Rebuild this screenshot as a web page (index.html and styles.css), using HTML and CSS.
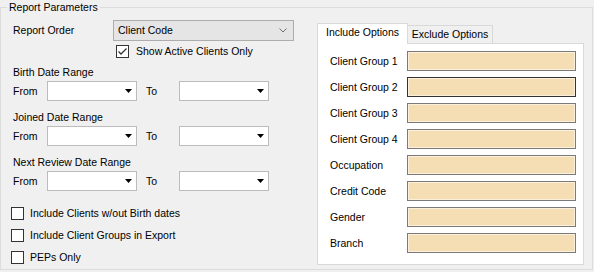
FILE: index.html
```html
<!DOCTYPE html>
<html lang="en">
<head>
  <meta charset="UTF-8">
  <title>Report Parameters</title>
  <link rel="stylesheet" href="styles.css">
</head>
<body>
  <fieldset class="params">
    <legend>Report Parameters</legend>
    <div class="params-body">

      <div class="left-col">
        <div class="order-row">
          <span class="order-label">Report Order</span>
          <div class="combo combo-order">
            <span>Client Code</span>
            <svg width="8" height="5" viewBox="0 0 8 5"><polyline points="0.5,0.5 4,4 7.5,0.5" fill="none" stroke="#707070" stroke-width="1"/></svg>
          </div>
        </div>

        <label class="check check-active">
          <span class="box"><svg width="11" height="11" viewBox="0 0 11 11"><polyline points="1.5,5.5 4,8 9.5,2.5" fill="none" stroke="#333" stroke-width="1.3"/></svg></span>
          Show Active Clients Only
        </label>

        <div class="range">
          <div class="range-title">Birth Date Range</div>
          <div class="range-row">
            <span>From</span>
            <div class="combo date"><svg width="7" height="4" viewBox="0 0 7 4"><polygon points="0,0 7,0 3.5,4" fill="#000"/></svg></div>
            <span class="to">To</span>
            <div class="combo date"><svg width="7" height="4" viewBox="0 0 7 4"><polygon points="0,0 7,0 3.5,4" fill="#000"/></svg></div>
          </div>
        </div>

        <div class="range">
          <div class="range-title">Joined Date Range</div>
          <div class="range-row">
            <span>From</span>
            <div class="combo date"><svg width="7" height="4" viewBox="0 0 7 4"><polygon points="0,0 7,0 3.5,4" fill="#000"/></svg></div>
            <span class="to">To</span>
            <div class="combo date"><svg width="7" height="4" viewBox="0 0 7 4"><polygon points="0,0 7,0 3.5,4" fill="#000"/></svg></div>
          </div>
        </div>

        <div class="range">
          <div class="range-title">Next Review Date Range</div>
          <div class="range-row">
            <span>From</span>
            <div class="combo date"><svg width="7" height="4" viewBox="0 0 7 4"><polygon points="0,0 7,0 3.5,4" fill="#000"/></svg></div>
            <span class="to">To</span>
            <div class="combo date"><svg width="7" height="4" viewBox="0 0 7 4"><polygon points="0,0 7,0 3.5,4" fill="#000"/></svg></div>
          </div>
        </div>

        <div class="extra-checks">
          <label class="check"><span class="box"></span>Include Clients w/out Birth dates</label>
          <label class="check"><span class="box"></span>Include Client Groups in Export</label>
          <label class="check"><span class="box"></span>PEPs Only</label>
        </div>
      </div>

      <div class="tabs">
        <div class="tab-strip">
          <div class="tab active">Include Options</div>
          <div class="tab">Exclude Options</div>
        </div>
        <div class="tab-page">
          <span>Client Group 1</span><div class="field"></div>
          <span>Client Group 2</span><div class="field focused"></div>
          <span>Client Group 3</span><div class="field"></div>
          <span>Client Group 4</span><div class="field"></div>
          <span>Occupation</span><div class="field"></div>
          <span>Credit Code</span><div class="field"></div>
          <span>Gender</span><div class="field"></div>
          <span>Branch</span><div class="field"></div>
        </div>
      </div>

    </div>
  </fieldset>
</body>
</html>
```

FILE: styles.css
```css
body {
  margin: 0;
  width: 594px;
  height: 272px;
  background: #f0f0f0;
  font-family: 'Liberation Sans', Arial, sans-serif;
  font-size: 10.5px;
  line-height: 13px;
  color: #000;
  overflow: hidden;
}

.params {
  margin: 0;
  padding: 0;
  width: 593px;
  height: 270px;
  box-sizing: border-box;
  border: 1px solid #dcdcdc;
}

.params legend {
  margin-left: 6px;
  padding: 0 2px;
  line-height: 14px;
}

.params-body {
  display: flex;
}

.left-col {
  width: 316px;
  box-sizing: border-box;
  padding: 6px 0 0 12px;
  display: flex;
  flex-direction: column;
}

.order-row {
  display: flex;
  align-items: center;
  height: 21px;
}

.order-label {
  width: 100px;
}

.combo {
  box-sizing: border-box;
  display: flex;
  align-items: center;
  justify-content: space-between;
}

.combo-order {
  width: 181px;
  height: 21px;
  padding: 0 6px 0 4px;
  background: #e5e5e5;
  border: 1px solid #adadad;
}

.check {
  display: flex;
  align-items: center;
  gap: 6px;
  height: 13px;
}

.box {
  width: 13px;
  height: 13px;
  box-sizing: border-box;
  border: 1px solid #333;
  background: #fff;
  display: flex;
  align-items: center;
  justify-content: center;
}

.check-active {
  margin: 4px 0 0 103px;
  gap: 7px;
}

.range {
  margin-top: 8px;
}

.range + .range {
  margin-top: 10px;
}

.range-title {
  height: 13px;
}

.range-row {
  margin-top: 2px;
  display: grid;
  grid-template-columns: 34px 90px 42px 90px;
  align-items: center;
}

.range-row .to {
  padding-left: 9px;
}

.date {
  height: 20px;
  background: #fff;
  border: 1px solid #bcbcbc;
  justify-content: flex-end;
  padding-right: 4px;
}

.extra-checks {
  margin: 16px 0 0 -2px;
  display: flex;
  flex-direction: column;
  gap: 9px;
}

.tabs {
  margin-top: 9px;
  width: 267px;
}

.tab-strip {
  display: flex;
  align-items: flex-end;
  height: 20px;
}

.tab {
  box-sizing: border-box;
  height: 18px;
  width: 86px;
  margin-left: -1px;
  padding-top: 2px;
  text-align: center;
  border: 1px solid #d9d9d9;
  border-bottom: none;
  background: #f0f0f0;
}

.tab.active {
  position: relative;
  z-index: 1;
  margin: 0 0 -1px 0;
  width: 91px;
  height: 21px;
  background: #fff;
}

.tab-page {
  box-sizing: border-box;
  height: 222px;
  padding: 7px 0 0 12px;
  background: #fff;
  border: 1px solid #d9d9d9;
  display: grid;
  grid-template-columns: 77px 169px;
  grid-auto-rows: 20px;
  row-gap: 6px;
  align-items: center;
}

.field {
  height: 20px;
  box-sizing: border-box;
  background: #f5deb3;
  border: 1px solid #7a7a7a;
  box-shadow: inset 0 0 0 1px #fbf0dc;
}

.field.focused {
  border-color: #333;
}
```
